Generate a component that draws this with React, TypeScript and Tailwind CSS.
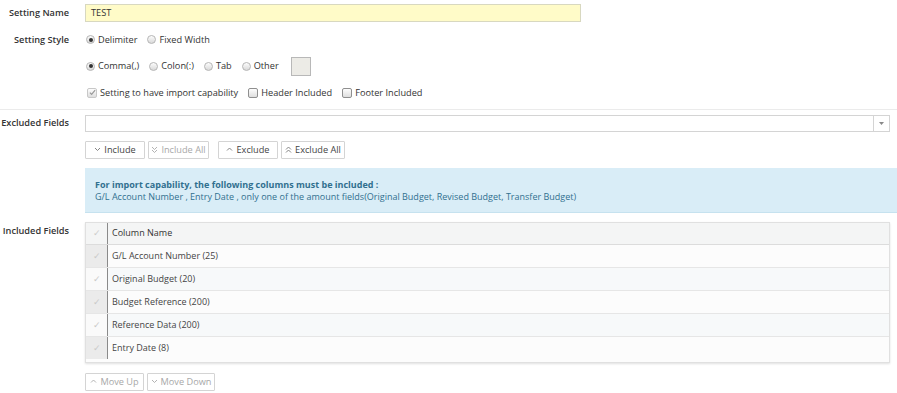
import React from "react";

function Radio({ checked }: { checked?: boolean }) {
  return (
    <span className="relative inline-flex w-[9px] h-[9px] shrink-0 items-center justify-center rounded-full border border-[#b5b5b5] bg-gradient-to-b from-[#fdfdfd] to-[#d9d9d9]">
      {checked && <span className="w-[4px] h-[4px] rounded-full bg-[#333]" />}
    </span>
  );
}

function Check({ checked, disabled }: { checked?: boolean; disabled?: boolean }) {
  return (
    <span
      className={`relative inline-flex w-[10px] h-[10px] shrink-0 items-center justify-center rounded-[2px] border bg-gradient-to-b from-[#fdfdfd] to-[#dedede] ${
        disabled ? "border-[#c8c8c8]" : "border-[#8f8f8f]"
      }`}
    >
      {checked && (
        <svg width="7" height="7" viewBox="0 0 8 8">
          <path d="M1 4.2 L3 6.2 L7 1.2" fill="none" stroke="#9a9a9a" strokeWidth="1.4" />
        </svg>
      )}
    </span>
  );
}

function Chevron({ dir, double, color = "#777" }: { dir: "up" | "down"; double?: boolean; color?: string }) {
  const d = dir === "down" ? "M1 1 L3.5 3.5 L6 1" : "M1 3.5 L3.5 1 L6 3.5";
  return (
    <svg width="7" height={double ? 7 : 5} viewBox={double ? "0 0 7 7" : "0 0 7 5"} className="shrink-0">
      <path d={d} fill="none" stroke={color} strokeWidth="0.9" />
      {double && <path d={d} transform="translate(0 3)" fill="none" stroke={color} strokeWidth="0.9" />}
    </svg>
  );
}

function Btn({
  children,
  icon,
  disabled,
  w,
}: {
  children: React.ReactNode;
  icon: React.ReactNode;
  disabled?: boolean;
  w: string;
}) {
  return (
    <button
      className={`${w} h-[18px] flex items-center justify-center gap-[3px] border border-[#d4d4d4] bg-white rounded-[1px] ${
        disabled ? "text-[#a8a8a8]" : "text-[#444]"
      }`}
    >
      {icon}
      <span>{children}</span>
    </button>
  );
}

function Label({ children, className = "" }: { children: React.ReactNode; className?: string }) {
  return (
    <div className={`w-[69px] shrink-0 text-right font-semibold text-[#333] whitespace-nowrap ${className}`}>
      {children}
    </div>
  );
}

const rows = [
  "G/L Account Number (25)",
  "Original Budget (20)",
  "Budget Reference (200)",
  "Reference Data (200)",
  "Entry Date (8)",
];

export default function App() {
  return (
    <div className="w-[897px] h-[393px] overflow-hidden bg-white font-['Open_Sans',sans-serif] text-[9.2px] leading-[13.5px] text-[#333]">
      {/* Setting name */}
      <div className="flex items-center gap-[16px] pt-[4px]">
        <Label>Setting Name</Label>
        <div className="w-[496px] h-[18px] border border-[#d8d8c0] bg-[#fffbc8] flex items-center px-[5px] text-[#333]">
          TEST
        </div>
      </div>

      {/* Setting style */}
      <div className="flex items-center gap-[16px] mt-[11px]">
        <Label>Setting Style</Label>
        <div className="flex items-center gap-[10px] pl-[1px]">
          <label className="flex items-center gap-[3px]">
            <Radio checked /> Delimiter
          </label>
          <label className="flex items-center gap-[3px]">
            <Radio /> Fixed Width
          </label>
        </div>
      </div>

      <div className="flex items-center gap-[10px] ml-[86px] mt-[10px] h-[19px]">
        <label className="flex items-center gap-[3px]">
          <Radio checked /> Comma(,)
        </label>
        <label className="flex items-center gap-[3px]">
          <Radio /> Colon(:)
        </label>
        <label className="flex items-center gap-[3px]">
          <Radio /> Tab
        </label>
        <label className="flex items-center gap-[3px]">
          <Radio /> Other
        </label>
        <div className="ml-[2px] w-[20px] h-[19px] border border-[#b8b8b8] bg-[#ecebe6]" />
      </div>

      <div className="flex items-center gap-[10px] ml-[87px] mt-[10px] h-[14px]">
        <label className="flex items-center gap-[3px]">
          <Check checked disabled /> Setting to have import capability
        </label>
        <label className="flex items-center gap-[3px]">
          <Check /> Header Included
        </label>
        <label className="flex items-center gap-[3px]">
          <Check /> Footer Included
        </label>
      </div>

      <div className="mt-[9px] h-px bg-[#ebebeb]" />

      {/* Excluded fields */}
      <div className="flex items-center gap-[16px] mt-[5px]">
        <Label>Excluded Fields</Label>
        <div className="w-[805px] h-[17px] border border-[#d4d4d4] bg-white flex justify-end">
          <div className="w-[16px] h-full border-l border-[#d4d4d4] flex items-center justify-center">
            <svg width="5" height="3" viewBox="0 0 5 3">
              <path d="M0 0 L5 0 L2.5 3 Z" fill="#888" />
            </svg>
          </div>
        </div>
      </div>

      <div className="flex items-center ml-[85px] mt-[9px]">
        <Btn w="w-[60px]" icon={<Chevron dir="down" />}>Include</Btn>
        <div className="ml-[3px]">
          <Btn w="w-[61px]" disabled icon={<Chevron dir="down" double color="#aaa" />}>Include All</Btn>
        </div>
        <div className="ml-[9px]">
          <Btn w="w-[60px]" icon={<Chevron dir="up" />}>Exclude</Btn>
        </div>
        <div className="ml-[3px]">
          <Btn w="w-[64px]" icon={<Chevron dir="up" double />}>Exclude All</Btn>
        </div>
      </div>

      {/* Info */}
      <div className="ml-[85px] mt-[9px] h-[45px] bg-[#d9edf7] border-b border-[#c6e2ef] px-[10px] pt-[11px] text-[9px] text-[#31708f] leading-[12px]">
        <div className="font-bold">For import capability, the following columns must be included :</div>
        <div>G/L Account Number , Entry Date , only one of the amount fields(Original Budget, Revised Budget, Transfer Budget)</div>
      </div>

      {/* Included fields */}
      <div className="flex items-start gap-[16px] mt-[9px]">
        <Label className="pt-[2px]">Included Fields</Label>
        <div className="w-[805px] h-[141px] border border-[#e0e0e0] shadow-[0_1px_2px_rgba(0,0,0,0.12)] bg-[#fcfcfc] text-[9px]">
          <div className="flex h-[22px] bg-[#f4f5f5] border-b border-[#dcdcdc]">
            <div className="w-[22px] flex items-center justify-center border-r border-[#8a8a8a] text-[#ccc]">✓</div>
            <div className="flex items-center pl-[4px] text-[#333]">Column Name</div>
          </div>
          {rows.map((r, i) => (
            <div
              key={r}
              className={`flex h-[23px] border-b ${i % 2 === 0 ? "bg-[#fcfcfc]" : "bg-[#f7f9fa]"} ${
                i === rows.length - 1 ? "border-transparent" : "border-[#e6e6e6]"
              }`}
            >
              <div
                className={`w-[22px] flex items-center justify-center border-r border-[#8a8a8a] text-[#c9c9c9] ${
                  i % 2 === 0 ? "bg-[#ebebeb]" : "bg-[#fafafa]"
                }`}
              >
                ✓
              </div>
              <div className="flex items-center pl-[4px] text-[#444]">{r}</div>
            </div>
          ))}
        </div>
      </div>

      <div className="flex items-center gap-[3px] ml-[85px] mt-[10px]">
        <Btn w="w-[59px]" disabled icon={<Chevron dir="up" color="#aaa" />}>Move Up</Btn>
        <Btn w="w-[68px]" disabled icon={<Chevron dir="down" color="#aaa" />}>Move Down</Btn>
      </div>
    </div>
  );
}
